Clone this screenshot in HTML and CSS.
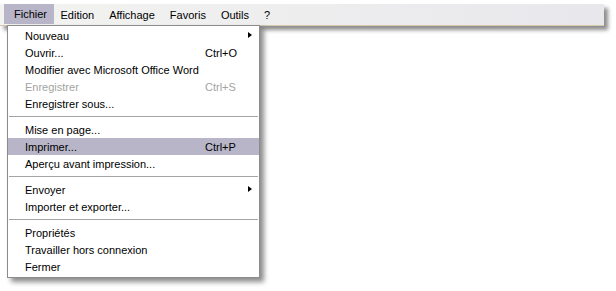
FILE: index.html
```html
<!DOCTYPE html>
<html>
<head>
<meta charset="utf-8">
<link rel="stylesheet" href="styles.css">
</head>
<body>
<div class="bar">
  <span class="top active">Fichier</span>
  <span class="top">Edition</span>
  <span class="top">Affichage</span>
  <span class="top">Favoris</span>
  <span class="top">Outils</span>
  <span class="top">?</span>
</div>
<div class="menu">
  <div class="item"><span class="label">Nouveau</span><span class="arrow"></span></div>
  <div class="item"><span class="label">Ouvrir...</span><span class="key">Ctrl+O</span></div>
  <div class="item"><span class="label">Modifier avec Microsoft Office Word</span></div>
  <div class="item disabled"><span class="label">Enregistrer</span><span class="key">Ctrl+S</span></div>
  <div class="item"><span class="label">Enregistrer sous...</span></div>
  <div class="sep"></div>
  <div class="item"><span class="label">Mise en page...</span></div>
  <div class="item hover"><span class="label">Imprimer...</span><span class="key">Ctrl+P</span></div>
  <div class="item"><span class="label">Aperçu avant impression...</span></div>
  <div class="sep"></div>
  <div class="item"><span class="label">Envoyer</span><span class="arrow"></span></div>
  <div class="item"><span class="label">Importer et exporter...</span></div>
  <div class="sep"></div>
  <div class="item"><span class="label">Propriétés</span></div>
  <div class="item"><span class="label">Travailler hors connexion</span></div>
  <div class="item"><span class="label">Fermer</span></div>
</div>
</body>
</html>
```
FILE: styles.css
```css
html, body {
  margin: 0;
  padding: 0;
  background: #ffffff;
}
body {
  font-family: "Liberation Sans", Arial, sans-serif;
  font-size: 11px;
  color: #000;
  width: 616px;
  height: 291px;
  position: relative;
  overflow: hidden;
}
.bar {
  margin-top: 4px;
  width: 600px;
  height: 21px;
  background: linear-gradient(to right, #f3f3f1, #e8e8ec);
  border-bottom: 1px solid #d6c9ac;
  box-shadow: 4px 4px 4px rgba(0, 0, 0, 0.45);
  display: flex;
  align-items: stretch;
  padding-left: 4px;
}
.top {
  display: flex;
  align-items: center;
  padding: 0 8.5px 0 6.5px;
}
.top.active {
  background: #b7b5c7;
  padding: 0 7px 0 10px;
  height: 20px;
}
.menu {
  position: absolute;
  left: 7px;
  top: 25px;
  width: 251px;
  background: #ffffff;
  border: 1px solid #8c8c8c;
  padding: 1px 0 2px 0;
  box-shadow: 4px 4px 5px rgba(0, 0, 0, 0.45);
}
.item {
  height: 17px;
  display: flex;
  align-items: center;
  padding-left: 17px;
  position: relative;
}
.item.hover {
  background: #b7b5c7;
}
.item.disabled {
  color: #a3a3a3;
}
.label {
  flex: 1;
}
.key {
  position: absolute;
  left: 197px;
}
.arrow {
  position: absolute;
  left: 240px;
  top: 5px;
  width: 0;
  height: 0;
  border-top: 3.5px solid transparent;
  border-bottom: 3.5px solid transparent;
  border-left: 4px solid #000;
}
.sep {
  height: 9px;
  display: flex;
  align-items: center;
  padding: 0 1px;
}
.sep::before {
  content: "";
  display: block;
  width: 100%;
  height: 1px;
  background: #a5a5a5;
}
```
